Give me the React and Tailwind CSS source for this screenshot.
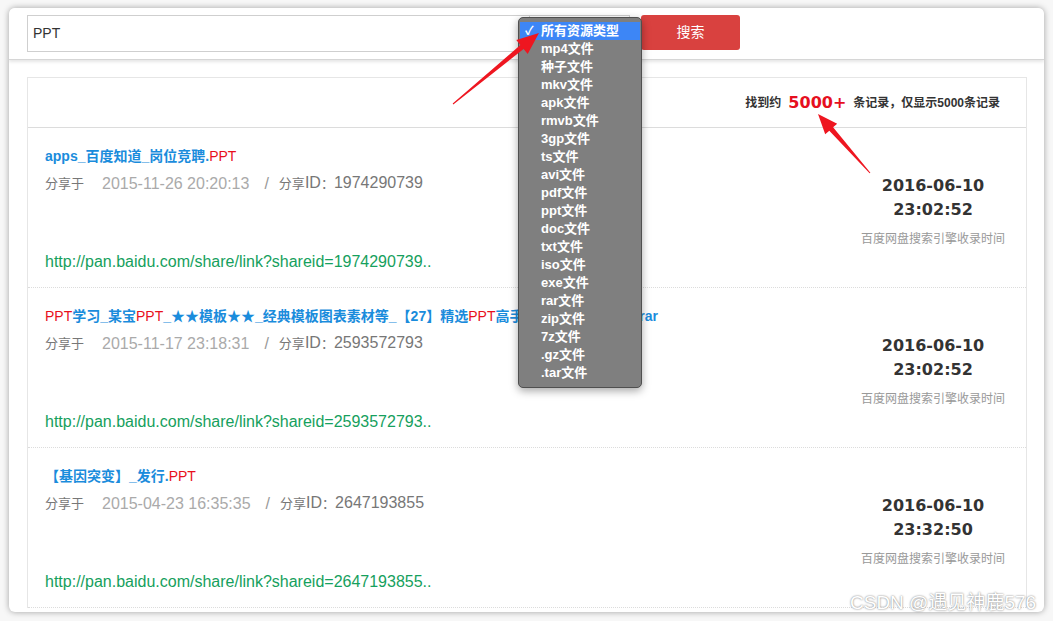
import React from 'react';

const BLUE = 'text-[#1a8cdc]';
const RED = 'text-[#e8101c]';

const options = [
  '所有资源类型', 'mp4文件', '种子文件', 'mkv文件', 'apk文件', 'rmvb文件', '3gp文件', 'ts文件',
  'avi文件', 'pdf文件', 'ppt文件', 'doc文件', 'txt文件', 'iso文件', 'exe文件', 'rar文件',
  'zip文件', '7z文件', '.gz文件', '.tar文件',
];

const rows = [
  {
    title: [['apps_百度知道_岗位竞聘.', 'b'], ['PPT', 'r']],
    shared: '2015-11-26 20:20:13',
    id: '1974290739',
    day: '2016-06-10',
    time: '23:02:52',
  },
  {
    title: [
      ['PPT', 'r'], ['学习_某宝', 'b'], ['PPT', 'r'], ['_★★模板★★_经典模板图表素材等_【27】精选', 'b'],
      ['PPT', 'r'], ['高手必备素材大全合集.rar', 'b'],
    ],
    shared: '2015-11-17 23:18:31',
    id: '2593572793',
    day: '2016-06-10',
    time: '23:02:52',
  },
  {
    title: [['【基因突变】_发行.', 'b'], ['PPT', 'r']],
    shared: '2015-04-23 16:35:35',
    id: '2647193855',
    day: '2016-06-10',
    time: '23:32:50',
  },
];

function ResultRow({ row }) {
  return (
    <div className="flex h-[160px] border-b border-dotted border-[#dcdcdc]">
      <div className="flex-1 pl-[17px] pt-[18px] whitespace-nowrap">
        <div className="text-[14px] leading-[20px] font-bold">
          {row.title.map(([t, c], i) => (
            <span key={i} className={c === 'r' ? `${RED} font-normal` : BLUE}>{t}</span>
          ))}
        </div>
        <div className="mt-[5px] flex items-center text-[16px] leading-[24px] text-[#777]">
          <span className="text-[13px]">分享于</span>
          <span className="ml-[18px] text-[#aaa]">{row.shared}</span>
          <span className="ml-[15px] text-[#999]">/</span>
          <span className="ml-[10px]"><span className="text-[13px]">分享</span>ID<span className="text-[13px]">：</span>{row.id}</span>
        </div>
        <div className="mt-[54px] text-[16px] leading-[24px] text-[#16a05d]">
          http://pan.baidu.com/share/link?shareid={row.id}..
        </div>
      </div>
      <div className="w-[186px] pt-[46px] flex flex-col items-center">
        <div className="font-['DejaVu_Sans',sans-serif] font-bold text-[16px] leading-[24px] text-[#333]">{row.day}</div>
        <div className="font-['DejaVu_Sans',sans-serif] font-bold text-[16px] leading-[24px] text-[#333]">{row.time}</div>
        <div className="mt-[8px] text-[12px] leading-[18px] text-[#999]">百度网盘搜索引擎收录时间</div>
      </div>
    </div>
  );
}

export default function App() {
  return (
    <div className="relative w-[1053px] h-[621px] overflow-hidden bg-[#f7f7f7] pt-[8px] pl-[9px] font-['Liberation_Sans','Noto_Sans_CJK_SC',sans-serif]">
      {/* window */}
      <div className="w-[1035px] h-[604px] bg-white rounded-[6px] overflow-hidden shadow-[0_0_6px_rgba(0,0,0,0.35)] flex flex-col">
        {/* search bar */}
        <div className="h-[52px] shrink-0 flex items-start pt-[7px] pl-[18px] border-b border-[#d6d6d6] shadow-[0_2px_3px_rgba(0,0,0,0.1)] relative z-10 bg-white">
          <div className="w-[503px] h-[37px] border border-[#cfcfcf] flex items-center pl-[5px] text-[14px] text-[#333]">PPT</div>
          <div className="w-[100px] h-[37px] border border-l-0 border-[#cfcfcf]"></div>
          <button className="ml-[11px] w-[99px] h-[35px] rounded-[3px] bg-[#d9413f] text-white text-[14px]">搜索</button>
        </div>
        {/* results */}
        <div className="flex-1 pt-[17px] px-[17px] pl-[18px]">
          <div className="border border-b-0 border-[#e6e6e6]">
            <div className="h-[50px] flex items-center justify-end pr-[26px] border-b border-[#dcdcdc] text-[12px] font-bold text-[#333]">
              <span>找到约</span>
              <span className="mx-[7px] font-['DejaVu_Sans',sans-serif] text-[16px] text-[#e60f1e]">5000+</span>
              <span>条记录，仅显示5000条记录</span>
            </div>
            {rows.map((row, i) => (
              <ResultRow key={i} row={row} />
            ))}
          </div>
        </div>
      </div>

      {/* open select menu */}
      <div className="absolute z-20 left-[518px] top-[17px] w-[124px] h-[371px] rounded-[5px] bg-[#7f7f7f] border border-[#4f4f4f] shadow-[0_3px_8px_rgba(0,0,0,0.35)] py-[4px] px-[1px]">
        {options.map((o, i) => (
          <div
            key={o}
            className={`h-[18px] flex items-center text-[13px] font-bold text-white ${i === 0 ? 'bg-[#3d86f6]' : ''}`}
          >
            <span className="w-[21px] pl-[5px] text-[12px]">{i === 0 ? '✓' : ''}</span>
            <span>{o}</span>
          </div>
        ))}
      </div>

      {/* annotation arrows */}
      <svg className="absolute z-30 left-0 top-0 pointer-events-none" width="1053" height="621" viewBox="0 0 1053 621">
        <polygon
          points="452.7,103.6 520.4,45.1 516.3,40.1 539,33 527.7,53.9 523.6,48.9 453.3,104.4"
          fill="#ee1620"
        />
        <polygon
          points="870.4,172.7 833.1,127.3 837.2,123.7 818,114 825.2,134.3 829.3,130.7 869.6,173.3"
          fill="#ee1620"
        />
      </svg>

      {/* watermark */}
      <div className="absolute z-30 left-[850px] top-[592px] text-[19px] leading-[22px] text-white whitespace-nowrap [text-shadow:0_0_2px_rgba(0,0,0,0.6)]">
        CSDN @遇见神鹿576
      </div>
    </div>
  );
}
